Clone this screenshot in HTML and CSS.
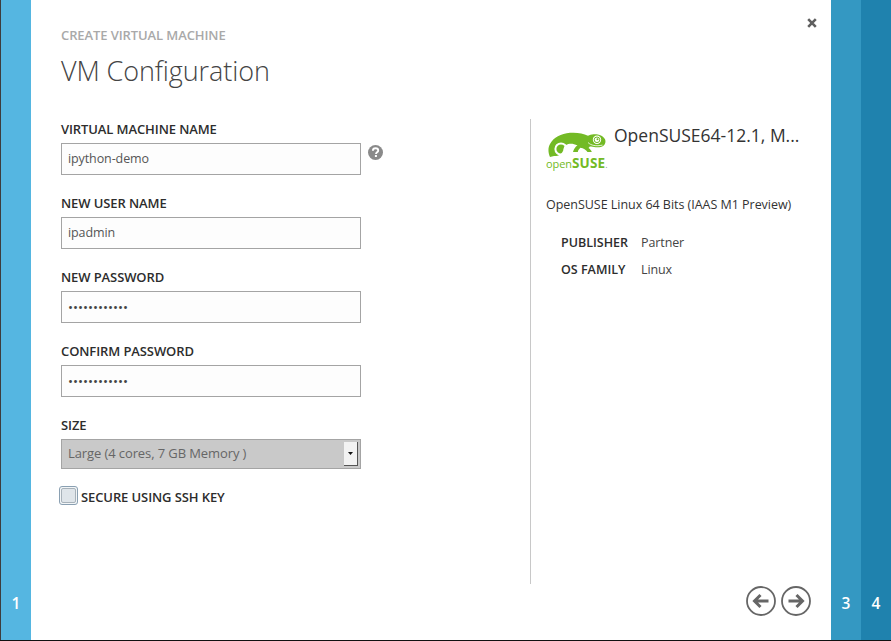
FILE: index.html
```html
<!DOCTYPE html>
<html lang="en">
<head>
<meta charset="utf-8">
<title>Create Virtual Machine</title>
<link rel="stylesheet" href="styles.css">
</head>
<body>
<div class="app">
  <div class="step step-1"><span>1</span></div>
  <main class="wizard">
    <button class="close" aria-label="Close">
      <svg width="10" height="10" viewBox="0 0 10 10"><path d="M1.2 1.2 8.8 8.8M8.8 1.2 1.2 8.8" stroke="#5f5f5f" stroke-width="2.6" fill="none"/></svg>
    </button>
    <header class="head">
      <div class="eyebrow">CREATE VIRTUAL MACHINE</div>
      <h1 class="title">VM Configuration</h1>
    </header>
    <div class="content">
      <form class="form">
        <div class="field">
          <label class="label">VIRTUAL MACHINE NAME</label>
          <div class="field-row">
            <div class="input">ipython-demo</div>
            <svg class="help" width="15" height="15" viewBox="0 0 15 15"><circle cx="7.5" cy="7.5" r="7.5" fill="#8a8a8a"/><path d="M4.9 5.7c0-1.6 1.2-2.4 2.7-2.4s2.6.8 2.6 2.1c0 1.9-2.2 1.9-2.2 3.6" fill="none" stroke="#fff" stroke-width="1.9"/><rect x="6.9" y="10" width="2" height="2" fill="#fff"/></svg>
          </div>
        </div>
        <div class="field">
          <label class="label">NEW USER NAME</label>
          <div class="input">ipadmin</div>
        </div>
        <div class="field">
          <label class="label">NEW PASSWORD</label>
          <div class="input dots">••••••••••••</div>
        </div>
        <div class="field">
          <label class="label">CONFIRM PASSWORD</label>
          <div class="input dots">••••••••••••</div>
        </div>
        <div class="field">
          <label class="label">SIZE</label>
          <div class="select">
            <span class="select-text">Large (4 cores, 7 GB Memory )</span>
            <span class="select-btn"><svg width="5" height="3" viewBox="0 0 5 3"><path d="M0 0h5L2.500 3z" fill="#111"/></svg></span>
          </div>
        </div>
        <div class="check-row">
          <span class="checkbox"><span class="checkbox-inner"></span></span>
          <span class="check-label">SECURE USING SSH KEY</span>
        </div>
      </form>
      <aside class="side">
        <div class="image-head">
          <div class="logo">
            <svg width="58" height="25" viewBox="0 0 58 25">
              <path fill="#73ba25" d="M2 25C.3 21-.4 16.500 2 12 5.500 5.500 13 1.500 22 .8c7-.5 13 .5 18 3 1.500-.9 3.500-1.400 5.500-1.500 5-.3 10 1.600 11.500 5 1 2.400.3 5-1.600 6.500-2.200 1.500-6 2-9.400 1.100-1.800-.5-3-.7-4.200-.3l-1.300 1.300c1.500 1 2.700 2.200 3.300 4l-4.300.1c-1.500-2.300-4-4-7-4.300-1.500 1.100-2.500 2.800-2.700 4.200l-4.800.1c.6-2.700 2.400-5.500 4.500-6.600-4.800-2.300-8.500-2.100-11.500-.3-1.400.9-2.100 2-2.500 3.300 0 3-2 5.600-5 7.100-1.500.6-3 .6-4.500.6z"/>
              <circle cx="13" cy="17" r="5.600" fill="none" stroke="#fff" stroke-width="2"/>
              <path d="M13.300 19.500a2.600 2.600 0 1 1 2-3.200" fill="none" stroke="#73ba25" stroke-width="1.500"/>
              <circle cx="49" cy="7.800" r="4.200" fill="#fff"/>
              <circle cx="49" cy="7.800" r="2.800" fill="none" stroke="#73ba25" stroke-width="1"/>
              <circle cx="49.500" cy="7.300" r="1" fill="#73ba25"/>
              <path d="M40 10.500c3 3 8 4 14.500 2.600" fill="none" stroke="#fff" stroke-width=".8"/>
            </svg>
            <div class="logo-text"><span class="logo-open">open</span><span class="logo-suse">SUSE</span><span class="logo-dot">.</span></div>
          </div>
          <div class="image-name">OpenSUSE64-12.1, M...</div>
        </div>
        <p class="desc">OpenSUSE Linux 64 Bits (IAAS M1 Preview)</p>
        <dl class="meta">
          <dt>PUBLISHER</dt><dd>Partner</dd>
          <dt>OS FAMILY</dt><dd>Linux</dd>
        </dl>
      </aside>
    </div>
    <footer class="foot">
      <button class="nav" aria-label="Back">
        <svg width="30" height="30" viewBox="0 0 30 30"><circle cx="15" cy="15" r="14" fill="#fff" stroke="#666" stroke-width="1.800"/><path d="M22.500 15H9M14.500 9 8.500 15l6 6" fill="none" stroke="#666" stroke-width="3"/></svg>
      </button>
      <button class="nav" aria-label="Next">
        <svg width="30" height="30" viewBox="0 0 30 30"><circle cx="15" cy="15" r="14" fill="#fff" stroke="#666" stroke-width="1.800"/><path d="M7.500 15H21M15.500 9l6 6-6 6" fill="none" stroke="#666" stroke-width="3"/></svg>
      </button>
    </footer>
  </main>
  <div class="step step-3"><span>3</span></div>
  <div class="step step-4"><span>4</span></div>
</div>
</body>
</html>
```
FILE: styles.css
```css
* { box-sizing: border-box; }
html, body { margin: 0; padding: 0; }
body {
  width: 891px;
  height: 641px;
  overflow: hidden;
  background: #111;
  font-family: "Open Sans", "Noto Sans", sans-serif;
  color: #333;
}
.app {
  display: flex;
  height: 640px;
  border-left: 1px solid #3d3d3d;
}
.step {
  width: 30px;
  flex: none;
  display: flex;
  align-items: flex-end;
  justify-content: center;
  color: #fff;
  font-size: 15.500px;
  font-weight: 600;
  line-height: 20px;
  padding-bottom: 27px;
}
.step-1 { background: #55b6e1; }
.step-3 { background: #3498c2; }
.step-4 { background: #1f82ae; }
.wizard {
  position: relative;
  flex: 1;
  background: #fff;
  display: flex;
  flex-direction: column;
  min-width: 0;
}
.close {
  position: absolute;
  top: 18px;
  right: 14px;
  width: 10px;
  height: 10px;
  padding: 0;
  border: 0;
  background: none;
  display: block;
}
.close svg { display: block; }
.head { padding: 27px 30px 0; height: 119px; }
.eyebrow {
  font-size: 13px;
  font-weight: 600;
  line-height: 16px;
  color: #a9a9a9;
  letter-spacing: -.1px;
}
.title {
  margin: 10px 0 0;
  font-size: 27px;
  font-weight: 300;
  line-height: 36px;
  color: #444;
  letter-spacing: -.1px;
}
.content { display: flex; height: 465px; }
.form { width: 499px; padding: 0 0 0 30px; flex: none; }
.field { height: 74px; }
.label {
  display: block;
  height: 24px;
  padding-top: 2px;
  font-size: 13px;
  font-weight: 600;
  line-height: 17px;
  color: #2d2d2d;
  letter-spacing: -.1px;
}
.field-row { display: flex; align-items: flex-start; gap: 7px; }
.field-row .help { margin-top: 2px; }
.input {
  width: 300px;
  height: 32px;
  border: 1px solid #a4a4a4;
  background: #fdfdfd;
  padding: 0 6px;
  font-size: 12.500px;
  line-height: 30px;
  color: #555;
  letter-spacing: -.1px;
}
.input.dots { font-size: 13.300px; letter-spacing: 0; color: #444; }
.select {
  width: 300px;
  height: 30px;
  border: 1px solid #a4a4a4;
  background: #c9c9c9;
  padding: 0 1px 0 6px;
  display: flex;
  align-items: center;
  justify-content: space-between;
  font-size: 13px;
  color: #666;
  letter-spacing: -.1px;
}
.select-text { margin-top: -2px; }
.select-btn {
  width: 14px;
  height: 24px;
  background: #f2f2f2;
  border-right: 1px solid #555;
  border-bottom: 1px solid #555;
  display: flex;
  align-items: center;
  justify-content: center;
  margin-right: 1px;
}
.select-btn svg { display: block; }
.check-row { display: flex; align-items: center; gap: 3px; margin: -4px 0 0 -2px; }
.checkbox {
  width: 19px;
  height: 19px;
  border: 1px solid #8aa0b2;
  border-radius: 3px;
  background: #f2f5f7;
  padding: 1px;
  flex: none;
}
.checkbox-inner {
  display: block;
  width: 15px;
  height: 15px;
  background: #dfe5ea;
  border: 1px solid #a8b2ba;
  border-radius: 2px;
}
.check-label {
  padding-top: 3px;
  font-size: 13px;
  font-weight: 600;
  color: #2d2d2d;
  letter-spacing: -.1px;
}
.side {
  flex: 1;
  border-left: 1px solid #c8c8c8;
  padding: 0 0 0 15px;
  min-width: 0;
}
.image-head { display: flex; height: 69px; padding-top: 10px; gap: 8px; }
.logo { width: 60px; flex: none; padding-top: 3px; }
.logo svg { display: block; margin-left: 2px; }
.logo-text {
  margin-top: 0;
  line-height: 11px;
  color: #73ba25;
  white-space: nowrap;
}
.logo-open { font-size: 11px; font-weight: 400; letter-spacing: -.1px; }
.logo-suse { font-size: 13.500px; font-weight: 700; letter-spacing: .2px; }
.logo-dot { font-size: 9px; color: #999; }
.image-name {
  font-size: 17.500px;
  line-height: 24px;
  color: #333;
  white-space: nowrap;
  margin-top: -7px;
  padding-top: 1px;
}
.desc {
  margin: 0;
  padding-top: 8px;
  font-size: 12.500px;
  line-height: 18px;
  color: #333;
  letter-spacing: -.03px;
}
.meta {
  margin: 20px 0 0 15px;
  display: grid;
  grid-template-columns: 80px auto;
  grid-auto-rows: 27px;
  font-size: 12.500px;
  line-height: 18px;
}
.meta dt { font-weight: 600; color: #2d2d2d; letter-spacing: 0; }
.meta dd { margin: 0; color: #444; letter-spacing: -.1px; }
.foot {
  flex: 1;
  display: flex;
  justify-content: flex-end;
  gap: 5px;
  padding: 2px 20px 0 0;
}
.nav {
  width: 30px;
  height: 30px;
  padding: 0;
  border: 0;
  background: none;
}
.nav svg { display: block; }
```
